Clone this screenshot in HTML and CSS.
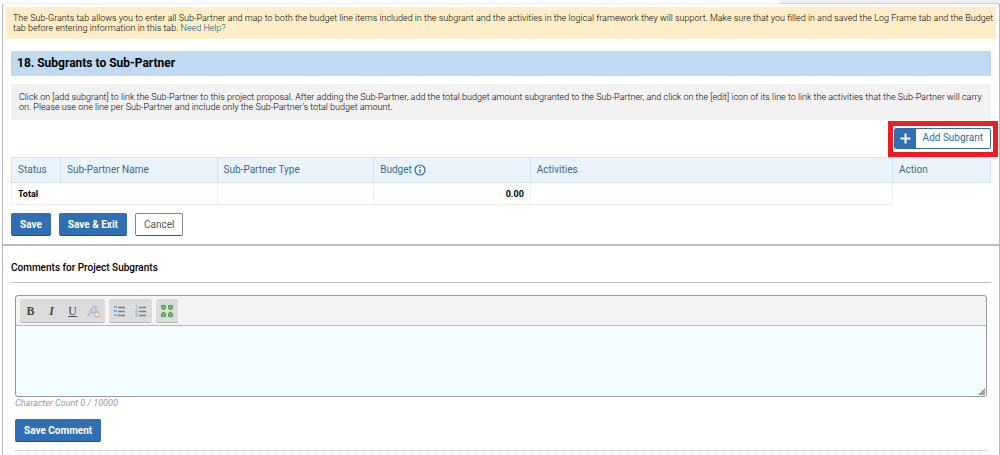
FILE: index.html
```html
<!DOCTYPE html>
<html lang="en">
<head>
<meta charset="utf-8">
<title>Subgrants to Sub-Partner</title>
<link rel="stylesheet" href="styles.css">
</head>
<body>
<div class="top-strip"><div class="top-shadow"></div></div>
<main class="page">
  <p class="notice">The Sub-Grants tab allows you to enter all Sub-Partner and map to both the budget line items included in the subgrant and the activities in the logical framework they will support. Make sure that you filled in and saved the Log Frame tab and the Budget tab before entering information in this tab. <a href="#help">Need Help?</a></p>
  <section class="subgrants">
    <h1 class="section-title">18. Subgrants to Sub-Partner</h1>
    <p class="hint">Click on [add subgrant] to link the Sub-Partner to this project proposal. After adding the Sub-Partner, add the total budget amount subgranted to the Sub-Partner, and click on the [edit] icon of its line to link the activities that the Sub-Partner will carry on. Please use one line per Sub-Partner and include only the Sub-Partner’s total budget amount.</p>
    <div class="table-actions">
      <div class="highlight">
        <button class="add-button" type="button">
          <span class="add-icon"><svg width="11" height="11" viewBox="0 0 11 11" aria-hidden="true"><path d="M5.5 .5v10M.5 5.5h10" stroke="#fff" stroke-width="2"/></svg></span>
          <span class="add-label">Add Subgrant</span>
        </button>
      </div>
    </div>
    <table class="grid">
      <colgroup><col class="c-status"><col class="c-mid"><col class="c-mid"><col class="c-mid"><col class="c-activities"><col class="c-action"></colgroup>
      <thead>
        <tr><th>Status</th><th>Sub-Partner Name</th><th>Sub-Partner Type</th><th><span class="with-icon">Budget <svg width="12" height="12" viewBox="0 0 12 12" aria-hidden="true"><circle cx="6" cy="6" r="5" fill="none" stroke="#2e6da4" stroke-width="1.2"/><path d="M6 5.2V9M6 2.8v1.3" stroke="#2e6da4" stroke-width="1.4"/></svg></span></th><th>Activities</th><th>Action</th></tr>
      </thead>
      <tbody>
        <tr><td colspan="2">Total</td><td></td><td class="amount">0.00</td><td></td></tr>
      </tbody>
    </table>
    <div class="buttons">
      <button class="btn primary" type="button">Save</button>
      <button class="btn primary" type="button">Save &amp; Exit</button>
      <button class="btn plain" type="button">Cancel</button>
    </div>
  </section>
  <section class="comments">
    <h2 class="comments-title"><label for="comment">Comments for Project Subgrants</label></h2>
    <div class="comment-form">
      <div class="editor">
        <div class="toolbar">
          <div class="tool-group">
            <button class="tool bold" type="button" aria-label="Bold">B</button>
            <button class="tool italic" type="button" aria-label="Italic">I</button>
            <button class="tool underline" type="button" aria-label="Underline">U</button>
            <button class="tool" type="button" aria-label="Remove format"><svg width="14" height="14" viewBox="0 0 14 14"><path d="M1 12L6.500 2.500h2L9.500 9M3.500 8.500H9" fill="none" stroke="#aebfdd" stroke-width="1.800"/><circle cx="10" cy="10.500" r="2.600" fill="#efd0bd" stroke="#dea98c"/><path d="M8.600 10.500h2.800" stroke="#fff"/></svg></button>
          </div>
          <div class="tool-group">
            <button class="tool" type="button" aria-label="Bulleted list"><svg width="12" height="12" viewBox="0 0 12 12"><path d="M0 1h3v2H0zM0 5h3v2H0zM0 9h3v2H0z" fill="#86a9df"/><path d="M4 2.500h7M4 6.500h7M4 10.500h7" stroke="#808080" stroke-width="1.300"/></svg></button>
            <button class="tool" type="button" aria-label="Numbered list"><svg width="12" height="12" viewBox="0 0 12 12"><path d="M.5 .5H2v3M.5 4.500H2v1.500H.5v1H3M.5 8.500H2v3H.5M.5 10H2" fill="none" stroke="#9fbae4"/><path d="M4 2.500h7M4 6.500h7M4 10.500h7" stroke="#808080" stroke-width="1.300"/></svg></button>
          </div>
          <div class="tool-group">
            <button class="tool" type="button" aria-label="Maximize"><svg width="14" height="14" viewBox="0 0 14 14"><path d="M1.500 1.500h4v3l-1 1h-2l-1-1zM8.500 1.500h4v3l-1 1h-2l-1-1zM2.500 8.500h2l1 1v3h-4v-3zM9.500 8.500h2l1 1v3h-4v-3z" fill="#6cbd69" stroke="#4aa44e"/></svg></button>
          </div>
        </div>
        <textarea id="comment" class="comment-box"></textarea>
        <svg class="grip" width="7" height="7" viewBox="0 0 7 7" aria-hidden="true"><path d="M7 0v7H0z" fill="#999"/><path d="M3 7l4-4M5.500 7L7 5.500" stroke="#ccc" stroke-width=".5"/></svg>
      </div>
      <p class="count">Character Count 0 / 10000</p>
      <button class="btn primary" type="button">Save Comment</button>
      <hr class="dotted">
    </div>
  </section>
</main>
</body>
</html>
```
FILE: styles.css
```css
* { box-sizing: border-box; }
body { margin: 0; background: #fff; color: #000; font: 9px/10px Roboto, sans-serif; overflow: hidden; }
h1, h2, p { margin: 0; }
button, textarea { font-family: inherit; margin: 0; }
a { color: #005a8c; text-decoration: none; }

.top-strip { height: 4px; margin-left: 3px; border-bottom: 1px solid #e8e8e8; position: relative; }
.top-shadow { position: absolute; top: -6px; right: 0; width: 22%; height: 8px; background: #f0f0f0; box-shadow: 0 1px 5px 1px rgba(0, 0, 0, .12); }
.page { margin-left: 2px; padding-top: 3px; border: solid #bbb; border-width: 0 1px; min-height: calc(100vh - 4px); }
.notice { margin: 0 3px; padding: 6px 0 6px 7px; background: #fdeec8; font-weight: 300; }

.subgrants { padding: 12px 8px 8px; border-bottom: 2px solid #bbb; }
.section-title { padding: 4px 6px 5px; background: #bfdaf1; font-size: 12px; line-height: 16px; font-weight: 700; }
.hint { margin-top: 8px; padding: 8px 0 8px 8px; background: #f2f2f2; font-weight: 300; }
.table-actions { display: flex; justify-content: flex-end; margin: 1px -7px 0 0; }
.highlight { padding: 2px 2px 3px 1px; border: 5px solid #ed1c24; }
.add-button { display: flex; padding: 0; border: 1px solid #2e6da4; border-radius: 2px; background: #fff; color: #2e6da4; font-size: 10px; line-height: 18px; overflow: hidden; }
.add-icon { display: grid; place-items: center; width: 21px; background: #2f6fb2; }
.add-label { padding: 0 7px 1px; }

.grid { width: 100%; border-collapse: collapse; table-layout: fixed; }
.c-status { width: 5%; }
.c-mid { width: 16%; }
.c-activities { width: 37%; }
.c-action { width: 10%; }
.grid th { height: 25px; padding: 0 6px; border: 1px solid #cfe5f7; background: #ebf3fa; color: #386a91; font-size: 10px; font-weight: 400; text-align: left; }
.grid td { height: 22px; padding: 0 6px; border: 1px solid #eee; font-weight: 700; }
.grid .amount { text-align: right; }
.with-icon { display: flex; align-items: center; gap: 2px; }

.buttons { display: flex; gap: 8px; margin-top: 8px; }
.btn { padding: 0 8px; border: 1px solid #2f6fb2; border-radius: 2px; font-size: 10px; line-height: 21px; }
.primary { background: #2f6fb2; color: #fff; font-weight: 700; border-bottom-color: #1e4f85; }
.plain { background: #fff; color: #555; border-color: #888; border-bottom-color: #555; }

.comments { padding: 17px 8px 0; }
.comments-title { padding-bottom: 9px; border-bottom: 1px solid #bbb; font-size: 10px; line-height: 10px; font-weight: 500; }
.comment-form { padding: 12px 4px 0; }
.editor { position: relative; border: 1px solid #999; border-radius: 3px; background: #f4f4f4; }
.toolbar { display: flex; gap: 4px; padding: 3px 4px 2px; border-bottom: 1px solid #bbb; }
.tool-group { display: flex; padding-right: 1px; border-bottom: 1px solid #bbb; border-radius: 2px; background: #dcdcdc; }
.tool { display: grid; place-items: center; width: 21px; height: 23px; padding: 0; border: 0; background: none; color: #484848; font: 12px/14px "Liberation Serif", serif; }
.bold { font-weight: 700; }
.italic { font-style: italic; font-weight: 700; }
.underline { text-decoration: underline; }
.comment-box { display: block; width: 100%; height: 70px; padding: 4px; border: 0; border-radius: 0 0 3px 3px; background: #f4fbfc; font-size: 10px; resize: none; outline: 0; }
.grip { position: absolute; right: 1px; bottom: 1px; }
.count { margin: 1px 0 11px; color: #999; font-style: italic; }
.dotted { margin: 8px 0 0; border: 0; border-top: 1px dotted #bbb; }
```
